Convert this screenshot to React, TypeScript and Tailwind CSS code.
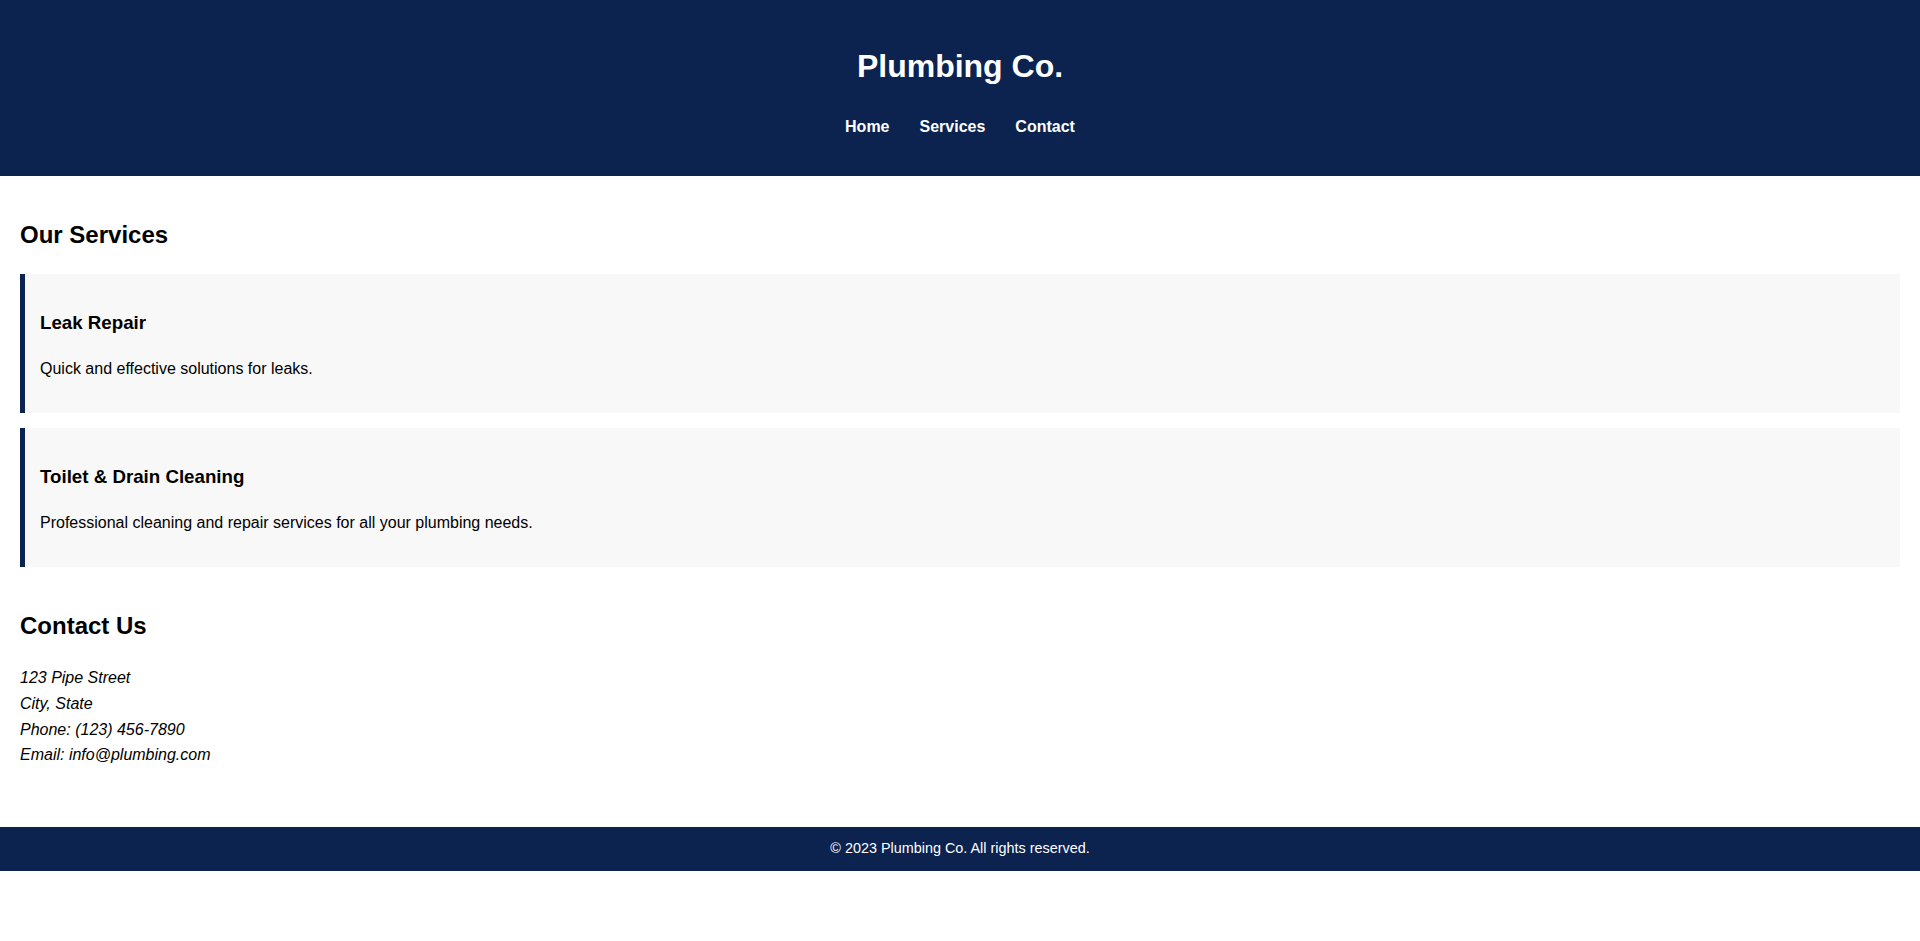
const services = [
  { title: 'Leak Repair', text: 'Quick and effective solutions for leaks.' },
  {
    title: 'Toilet & Drain Cleaning',
    text: 'Professional cleaning and repair services for all your plumbing needs.',
  },
];

export default function App() {
  return (
    <div className="min-h-[941px] bg-white text-black font-['Liberation_Sans',Arial,sans-serif]">
      {/* Header */}
      <header className="bg-[#0c2350] text-white text-center pt-[48px] pb-[40px]">
        <h1 className="text-[32px] font-bold leading-[36.8px]">Plumbing Co.</h1>
        <nav className="mt-[33px] flex justify-center gap-[30px] text-[16px] font-bold leading-[18.4px]">
          <a href="#">Home</a>
          <a href="#">Services</a>
          <a href="#">Contact</a>
        </nav>
      </header>

      <main className="px-5">
        {/* Services */}
        <section className="pt-[45px]">
          <h2 className="text-[24px] font-bold leading-[27.6px]">Our Services</h2>
          <div className="mt-[25px] flex flex-col gap-[15px]">
            {services.map((s) => (
              <div
                key={s.title}
                className="bg-[#f8f8f8] border-l-[5px] border-[#0c2350] pl-[15px] pr-5 pt-[38px] pb-[34px] h-[139px]"
              >
                <h3 className="text-[18.72px] font-bold leading-[21.5px]">{s.title}</h3>
                <p className="mt-[27px] text-[16px] leading-[18.4px]">{s.text}</p>
              </div>
            ))}
          </div>
        </section>

        {/* Contact */}
        <section className="pt-[45px]">
          <h2 className="text-[24px] font-bold leading-[27.6px]">Contact Us</h2>
          <address className="mt-[26px] text-[16px] leading-[25.6px] italic">
            123 Pipe Street
            <br />
            City, State
            <br />
            Phone: (123) 456-7890
            <br />
            Email: info@plumbing.com
          </address>
        </section>
      </main>

      {/* Footer */}
      <footer className="mt-[59px] bg-[#0c2350] text-white text-center text-[14.4px] leading-[22px] pt-[10px] pb-[12px]">
        © 2023 Plumbing Co. All rights reserved.
      </footer>
    </div>
  );
}
